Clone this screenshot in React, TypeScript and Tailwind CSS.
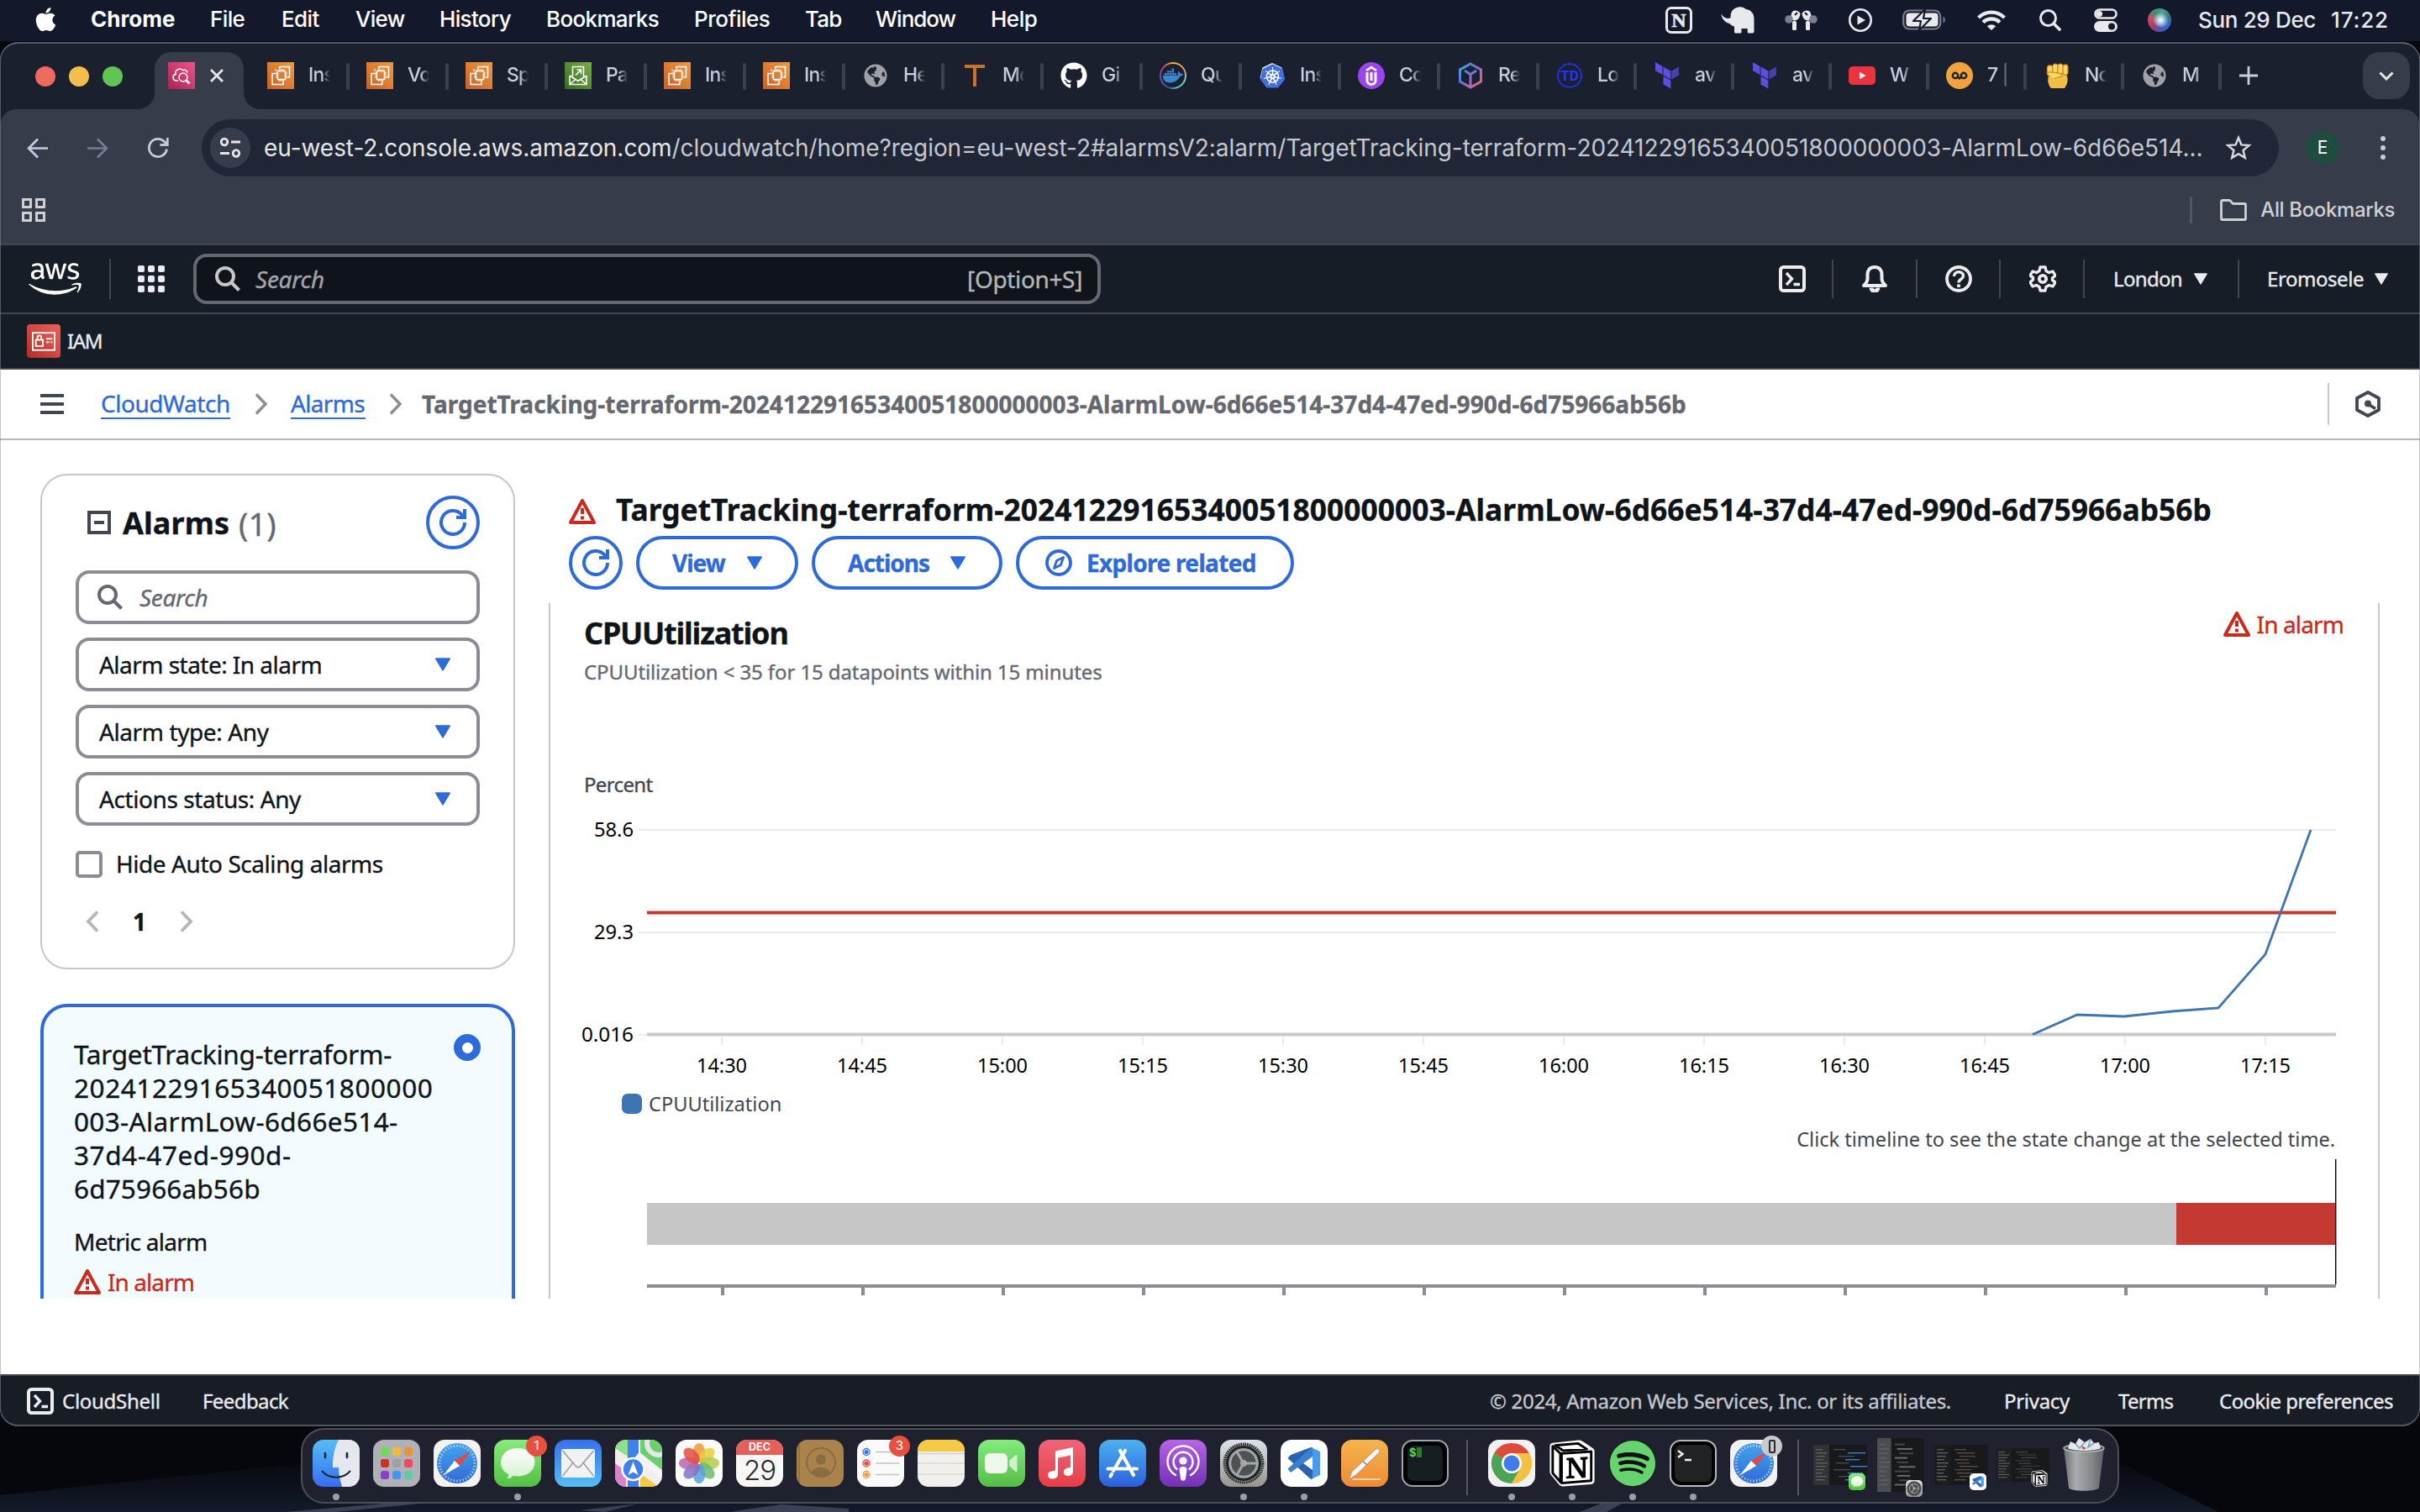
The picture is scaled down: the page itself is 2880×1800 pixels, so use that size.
import React from "react";
import { FaApple, FaAws, FaGithub, FaDocker, FaGlobeAmericas, FaSpotify } from "react-icons/fa";
import { SiKubernetes } from "react-icons/si";

type Kids = { children?: React.ReactNode };

const ALARM = "TargetTracking-terraform-20241229165340051800000003-AlarmLow-6d66e514-37d4-47ed-990d-6d75966ab56b";

/* ------------------------------------------------------------------ menu bar */

const menus: [string, string][] = [
  ["File", "w-[85px] tracking-[-0.6px]"],
  ["Edit", "w-[88px] tracking-[-0.6px]"],
  ["View", "w-[100px] tracking-[-0.7px]"],
  ["History", "w-[127px] tracking-[-0.66px]"],
  ["Bookmarks", "w-[176px] tracking-[-0.65px]"],
  ["Profiles", "w-[132px] tracking-[-0.5px]"],
  ["Tab", "w-[84px] tracking-[-0.8px]"],
  ["Window", "w-[137px] tracking-[-1px]"],
  ["Help", "tracking-[-0.5px]"],
];

function MenuBar() {
  return (
    <div className="flex h-[49px] items-start bg-[#13182b] text-[26px] font-medium text-white">
      <div className="flex h-[45px] items-center pl-[40px]">
        <FaApple className="mr-[39px] h-[32px] w-[29px]" />
        <span className="w-[142px] font-bold">Chrome</span>
        {menus.map(([m, c]) => (
          <span key={m} className={c}>{m}</span>
        ))}
      </div>
      <div className="ml-auto flex h-[47px] items-center pr-[37px] text-[#e8e9ec]">
        <div className="flex size-[32px] items-center justify-center rounded-[7px] border-[3px] border-current font-['Liberation_Serif'] text-[24px] font-bold leading-none [-webkit-text-stroke:0.6px]">
          N
        </div>
        <svg viewBox="0 0 40 32" className="ml-[34px] h-[32px] w-[40px]" fill="currentColor">
          <path d="M.3 8.500C3 13 8 15.500 11.500 13C11.500 6 14 1.500 21 .4C25 0 28 1.300 30 3C37 4 39.500 9 39.500 15V29.500C39.500 30.800 38.500 31.500 37.500 31.500H33.500C32.300 31.500 31.700 31 31.700 30V26H24.500V30C24.500 31 24 31.500 23 31.500H18C16.500 31.500 16 31 16 30V23.500C13.500 23 12 21.500 10 20C5 18.500 1 14.500 .3 8.500Z" />
        </svg>
        <svg viewBox="0 0 40 28" className="ml-[36px] h-[28px] w-[40px]">
          <g fill="currentColor">
            <path d="M10 3A7 6.500 0 0 1 18.500 6C18 11 16 14 11 14.500C7 14 6 7 10 3Z" />
            <rect x="9" y="15" width="5" height="11" rx="1.500" />
            <path d="M29 3A7 6.500 0 0 0 20.500 6C21 11 23 14 28 14.500C32 14 33 7 29 3Z" />
            <rect x="25" y="15" width="5" height="11" rx="1.500" />
          </g>
          <circle cx="5" cy="13" r="4.800" fill="#7b7e8b" />
          <circle cx="34" cy="13" r="4.800" fill="#7b7e8b" />
          <path d="M12 8L15 5M27 8L24 5" stroke="#13182b" strokeWidth="2" />
        </svg>
        <svg viewBox="0 0 28 28" className="ml-[36px] size-[28px]">
          <circle cx="14" cy="14" r="12.700" fill="none" stroke="currentColor" strokeWidth="2.600" />
          <path d="M10.500 8.500L20 14L10.500 19.500Z" fill="currentColor" />
        </svg>
        <svg viewBox="0 0 52 26" className="ml-[36px] h-[26px] w-[52px]">
          <rect x="1.200" y="1.500" width="44" height="22" rx="7" fill="none" stroke="#7b7e8b" strokeWidth="2.200" />
          <rect x="4.500" y="4.500" width="38" height="16" rx="4" fill="currentColor" />
          <path d="M48.500 8.500C51.500 10 51.500 15 48.500 16.500Z" fill="#7b7e8b" />
          <path d="M27 0L13 14H22L20 25L34 11H25Z" fill="currentColor" stroke="#13182b" strokeWidth="2.200" strokeLinejoin="round" />
        </svg>
        <svg viewBox="0 0 34 26" className="ml-[37px] h-[26px] w-[34px]" fill="none" stroke="currentColor" strokeWidth="4.400">
          <path d="M1.500 10A22 22 0 0 1 32.500 10" />
          <path d="M7 15.500A14.500 14.500 0 0 1 27 15.500" />
          <path d="M11.800 20.200A7.600 7.600 0 0 1 22.200 20.200L17 25Z" fill="currentColor" stroke="none" />
        </svg>
        <svg viewBox="0 0 26 26" className="ml-[40px] size-[26px]" fill="none" stroke="currentColor" strokeWidth="3" strokeLinecap="round">
          <circle cx="10.500" cy="10.500" r="9" />
          <path d="M17.500 17.500L24 24" strokeWidth="3.600" />
        </svg>
        <svg viewBox="0 0 28 28" className="ml-[39px] size-[28px]">
          <rect x="1.500" y="1.500" width="25" height="10" rx="5" fill="none" stroke="currentColor" strokeWidth="2.600" />
          <circle cx="6.500" cy="6.500" r="3.600" fill="currentColor" />
          <rect x="0" y="15" width="28" height="13" rx="6.500" fill="currentColor" />
          <circle cx="21" cy="21.500" r="4" fill="#13182b" />
        </svg>
        <div className="ml-[36px] size-[28px] rounded-full bg-[radial-gradient(circle_at_55%_50%,#ffffff_0%,#b9d8ec_16%,transparent_45%),conic-gradient(from_20deg,#4aa08a,#3d6f86,#2f6bd0,#4a55b5,#a23b68,#d0485f,#3f8f6d,#4aa08a)]" />
        <span className="ml-[32px] w-[158px] whitespace-pre tracking-[-0.34px]">Sun 29 Dec</span>
        <span className="w-[69px] tracking-[0.86px]">17:22</span>
      </div>
    </div>
  );
}

/* ------------------------------------------------------------------- favicons */

function Ec2() {
  return (
    <svg viewBox="0 0 32 32" className="size-[32px]">
      <defs>
        <linearGradient id="ec2" x1="0" y1="1" x2="1" y2="0"><stop stopColor="#c8602a" /><stop offset="1" stopColor="#ef9b3e" /></linearGradient>
      </defs>
      <rect width="32" height="32" fill="url(#ec2)" />
      <g fill="none" stroke="#fff" strokeWidth="1.500">
        <rect x="12.500" y="10.500" width="9" height="10" />
        <path d="M10.500 13.500H6V26.500H19V22.500M10 10.500V8.500M15 8V5.500H26.500V18H24M14.500 10V8.500M17 10V8.500M19.500 10V8.500M14.500 21V22.500M17 21V22.500M19.500 21V22.500M10.500 13H12.500M10.500 15.500H12.500M10.500 18H12.500M21.500 13H23.500M21.500 15.500H23.500M21.500 18H23.500" />
      </g>
    </svg>
  );
}

function Terraform() {
  return (
    <svg viewBox="0 0 28 32" className="h-[32px] w-[28px]">
      <g fill="#5f4de0">
        <path d="M0 0L8.500 5V15L0 10Z" />
        <path d="M9.500 5.500L18.300 10.600V20.500L9.500 15.500Z" />
        <path d="M9.500 16.700L18.300 21.700V31.500L9.500 26.600Z" />
      </g>
      <path d="M19.200 10.600L28 5.500V15.500L19.200 20.500Z" fill="#4440b2" />
    </svg>
  );
}

function Udacity() {
  return (
    <div className="flex size-[32px] items-center justify-center rounded-full bg-[#9b45ee]">
      <svg viewBox="0 0 16 24" className="h-[24px] w-[16px]" fill="none" stroke="#fff" strokeWidth="3">
        <path d="M3 8V18A5 4.500 0 0 0 13 18V8M8 8V18" />
        <path d="M2 6L8 2L14 6" strokeWidth="2.600" />
      </svg>
    </div>
  );
}

const favicons: Record<string, React.ReactNode> = {
  ec2: <Ec2 />,
  pa: (
    <svg viewBox="0 0 32 32" className="size-[32px]">
      <defs>
        <linearGradient id="ses" x1="0" y1="1" x2="1" y2="0"><stop stopColor="#356b22" /><stop offset="1" stopColor="#78b043" /></linearGradient>
      </defs>
      <rect width="32" height="32" fill="url(#ses)" />
      <g fill="none" stroke="#fff" strokeWidth="1.600">
        <path d="M6 16V26.500H26V16M6 16L16 22.500L26 16M6.500 26L13 20.500M25.500 26L19 20.500" />
        <path d="M9.500 17V5.500H22.500V17M13 15.500L19 9.500M14.500 9H19.500V14" />
      </g>
    </svg>
  ),
  globe: <FaGlobeAmericas className="size-[28px] text-[#9fa1a6]" />,
  t: (
    <svg viewBox="0 0 24 26" className="h-[26px] w-[24px]" fill="#c87328"><path d="M0 0H24V4H14V26H10V4H0Z" /></svg>
  ),
  github: <FaGithub className="size-[32px] text-white" />,
  docker: (
    <div className="flex size-[32px] items-center justify-center rounded-full bg-[conic-gradient(from_0deg,#f2b04c,#e99a57_15%,#7fc8d8_30%,#58c5d8_45%,#2f5a72_55%,#4b5ca8_65%,#7b4aa0_78%,#e0485d_88%,#f2b04c)]">
      <div className="flex size-[28px] items-center justify-center rounded-full bg-[#1b202f]">
        <FaDocker className="size-[24px] text-[#3a86d1]" />
      </div>
    </div>
  ),
  k8s: (
    <div className="relative flex size-[32px] items-center justify-center">
      <svg viewBox="0 0 32 32" className="absolute inset-0 size-[32px]"><path d="M16 1L27.500 6.500L30.500 19L22.500 30H9.500L1.500 19L4.500 6.500Z" fill="#fff" /></svg>
      <SiKubernetes className="relative size-[29px] text-[#3f6fdc]" />
    </div>
  ),
  udacity: <Udacity />,
  cube: (
    <svg viewBox="0 0 30 32" className="h-[32px] w-[30px]" fill="none" strokeWidth="3">
      <defs>
        <linearGradient id="cube" x1="0" y1="0" x2="1" y2="1"><stop stopColor="#43b3dd" /><stop offset=".35" stopColor="#5a78d8" /><stop offset=".65" stopColor="#a568cc" /><stop offset="1" stopColor="#ee6a4d" /></linearGradient>
      </defs>
      <path d="M15 2L27.500 9V23L15 30L2.500 23V9ZM8 10L15 14.500L22 10M15 14.500V29" stroke="url(#cube)" />
    </svg>
  ),
  td: (
    <div className="flex size-[30px] items-center justify-center rounded-full border-[2px] border-[#1d2fe0] font-['Roboto'] text-[17px] leading-none font-bold text-[#2436ec]">TD</div>
  ),
  tf: <Terraform />,
  yt: (
    <svg viewBox="0 0 32 22" className="h-[22px] w-[32px]"><rect width="32" height="22" rx="5" fill="#eb333f" /><path d="M13 6.800L20.500 11L13 15.200Z" fill="#fff" /></svg>
  ),
  owl: (
    <svg viewBox="0 0 32 32" className="size-[32px]"><circle cx="16" cy="16" r="16" fill="#f0a23f" /><g fill="none" stroke="#1e2230" strokeWidth="2.400"><circle cx="11" cy="16" r="3.200" /><circle cx="21" cy="16" r="3.200" /><path d="M13.500 17.500L16 19.500L18.500 17.500" /></g></svg>
  ),
  fist: (
    <svg viewBox="0 0 28 32" className="h-[30px] w-[27px]">
      <path d="M3 16C3 12 25 10 26 16C29 25 24 30 23 32H6C2 28 1 21 3 16Z" fill="#f2bf45" />
      <g fill="#fbd664" stroke="#c98a1e" strokeWidth="1.200"><rect x="1" y="3" width="7" height="13" rx="3.300" /><rect x="8" y="1" width="6.500" height="13" rx="3.200" /><rect x="14.500" y="1" width="6.500" height="13" rx="3.200" /><rect x="21" y="2" width="6.300" height="13" rx="3.100" /><path d="M1.500 14C1 11 4 11 10 12C16 13 20 13 20 16C20 18 13 18 10 20" /></g>
    </svg>
  ),
};

const tabs: [string, string][] = [
  ["ec2", "Ins"], ["ec2", "Vo"], ["ec2", "Sp"], ["pa", "Pa"], ["ec2", "Ins"], ["ec2", "Ins"],
  ["globe", "He"], ["t", "Mc"], ["github", "Gi"], ["docker", "Qu"], ["k8s", "Ins"], ["udacity", "Co"], ["cube", "Re"],
  ["td", "Lo"], ["tf", "av"], ["tf", "av"], ["yt", "W"], ["owl", "7 |"], ["fist", "No"], ["globe", "M"],
];

function TabStrip() {
  return (
    <div className="flex h-[80px] bg-[#1b202f]">
      <div className="flex w-[184px] items-center gap-[16px] pt-[2px] pl-[42px]">
        <div className="size-[24px] rounded-full bg-[#ec6a5e]" />
        <div className="size-[24px] rounded-full bg-[#f4be4f]" />
        <div className="size-[24px] rounded-full bg-[#61c454]" />
      </div>
      <div className="relative mt-[12px] flex h-[68px] w-[106px] items-start rounded-t-[20px] bg-[#373c4b] pt-[12px] pl-[16px]">
        <svg className="absolute bottom-0 -left-[20px] size-[20px]" viewBox="0 0 20 20"><path d="M20 0V20H0A20 20 0 0 0 20 0Z" fill="#373c4b" /></svg>
        <svg className="absolute -right-[20px] bottom-0 size-[20px]" viewBox="0 0 20 20"><path d="M0 0V20H20A20 20 0 0 1 0 0Z" fill="#373c4b" /></svg>
        <svg viewBox="0 0 32 32" className="size-[32px]">
          <defs>
            <linearGradient id="cw" x1="0" y1="1" x2="1" y2="0"><stop stopColor="#a82650" /><stop offset="1" stopColor="#f0528e" /></linearGradient>
          </defs>
          <rect width="32" height="32" fill="url(#cw)" />
          <g fill="none" stroke="#fff" strokeWidth="1.500">
            <path d="M12 22H9C5 21 5 15.500 9 14.500C8 9 14 6 17.500 9.500C21 8.500 23 10.500 23 12.500" />
            <circle cx="18" cy="18" r="5" /><path d="M21.500 21.500L25.500 25.500" strokeWidth="2.600" />
          </g>
        </svg>
        <svg viewBox="0 0 16 16" className="mt-[8px] ml-[18px] size-[16px]" stroke="#e3e5ea" strokeWidth="2.800"><path d="M1 1L15 15M15 1L1 15" /></svg>
      </div>
      <div className="flex pl-[8px]">
        {tabs.map(([icon, label], i) => (
          <div key={i} className={i < 13 ? "flex w-[118px] pt-[24px] pl-[20px]" : "flex w-[116px] pt-[24px] pl-[20px]"}>
            <div className="flex size-[32px] shrink-0 items-center justify-center">{favicons[icon]}</div>
            <div className="ml-[17px] h-[32px] w-[26px] text-[23px] leading-[31px] font-medium tracking-[-0.8px] whitespace-pre text-[#c6cde0] [mask-image:linear-gradient(to_right,#000_60%,transparent)]">
              {label}
            </div>
            <div className="mt-[1px] ml-auto h-[32px] w-[4px] rounded-full bg-[#3b4050]" />
          </div>
        ))}
      </div>
      <svg viewBox="0 0 22 22" className="mt-[29px] ml-[21px] size-[22px]" stroke="#c6cde0" strokeWidth="2.800"><path d="M11 0V22M0 11H22" /></svg>
      <div className="mt-[12px] mr-[12px] ml-auto flex size-[56px] items-center justify-center rounded-[20px] bg-[#373c4b]">
        <svg viewBox="0 0 18 11" className="h-[11px] w-[18px]" fill="none" stroke="#e3e5ea" strokeWidth="3"><path d="M1.500 1.500L9 9L16.500 1.500" /></svg>
      </div>
    </div>
  );
}

function Toolbar() {
  return (
    <div className="bg-[#1b202f]">
      <div className="h-[160px] rounded-t-[20px] bg-[#373c4b]">
        <div className="flex h-[80px] items-center pt-[12px]">
          <div className="flex h-[68px] w-[240px] items-center pl-[32px] text-[#c3cbe1]">
            <svg viewBox="0 0 24 24" className="size-[25px]" fill="none" stroke="currentColor" strokeWidth="2.600"><path d="M24 12H2M12.500 1.500L2 12L12.500 22.500" /></svg>
            <svg viewBox="0 0 24 24" className="ml-[47px] size-[25px] text-[#777d8f]" fill="none" stroke="currentColor" strokeWidth="2.600"><path d="M0 12H22M11.500 1.500L22 12L11.500 22.500" /></svg>
            <svg viewBox="0 0 26 26" className="ml-[46px] size-[26px]" fill="none" stroke="currentColor" strokeWidth="2.800"><path d="M23.500 14.500A10.600 10.600 0 1 1 20.500 5.500L24 9M24.300 1V9.500H15.500" /></svg>
          </div>
          <div className="flex h-[68px] w-[2472px] items-center rounded-full bg-[#202635] pr-[32px] pl-[10px]">
            <div className="flex size-[48px] items-center justify-center rounded-full bg-[#373c4b]">
              <svg viewBox="0 0 26 26" className="size-[26px]" fill="none" stroke="#e3e5ea" strokeWidth="2.800"><circle cx="6" cy="6" r="3.800" /><path d="M14 6H25M1 19.500H12" /><circle cx="20" cy="19.500" r="3.800" /></svg>
            </div>
            <div className="ml-[16px] text-[28px] tracking-[-0.05px] whitespace-nowrap text-[#c4c8d1]">
              <span className="text-[#e6e7ea]">eu-west-2.console.aws.amazon.com</span>/cloudwatch/home?region=eu-west-2#alarmsV2:alarm/TargetTracking-terraform-20241229165340051800000003-AlarmLow-6d66e514...
            </div>
            <svg viewBox="0 0 32 31" className="ml-auto h-[30px] w-[32px]" fill="none" stroke="#d6d8de" strokeWidth="2.600"><path d="M16 3L19.600 11.800L29 12.500L21.800 18.600L24 27.800L16 22.900L8 27.800L10.200 18.600L3 12.500L12.400 11.800Z" /></svg>
          </div>
          <div className="ml-[32px] flex size-[40px] items-center justify-center rounded-full bg-[#1e4d3f] text-[21px] text-white">E</div>
          <svg viewBox="0 0 6 28" className="ml-[49px] h-[28px] w-[6px]" fill="#c3cbe1"><circle cx="3" cy="3" r="3" /><circle cx="3" cy="14" r="3" /><circle cx="3" cy="25" r="3" /></svg>
        </div>
        <div className="flex h-[80px] items-center pr-[30px] pl-[26px] text-[#cfd0d4]">
          <svg viewBox="0 0 28 28" className="size-[28px]" fill="none" stroke="currentColor" strokeWidth="3"><path d="M1.500 1.500H10.500V10.500H1.500ZM17.500 1.500H26.500V10.500H17.500ZM1.500 17.500H10.500V26.500H1.500ZM17.500 17.500H26.500V26.500H17.500Z" /></svg>
          <div className="ml-auto h-[32px] w-[3px] bg-[#505667]" />
          <svg viewBox="0 0 32 26" className="ml-[33px] h-[26px] w-[32px]" fill="none" stroke="currentColor" strokeWidth="2.800" strokeLinejoin="round"><path d="M1.500 3A1.500 1.500 0 0 1 3 1.500H11.500L15.500 5.500H29A1.500 1.500 0 0 1 30.500 7V23A1.500 1.500 0 0 1 29 24.500H3A1.500 1.500 0 0 1 1.500 23Z" /></svg>
          <span className="ml-[16px] text-[24px] font-medium tracking-[-0.38px]">All Bookmarks</span>
        </div>
      </div>
    </div>
  );
}

/* ---------------------------------------------------------------- AWS console */

function Triangle({ className }: { className: string }) {
  return (
    <svg viewBox="0 0 20 16" className={className}><path d="M1.800 1H18.200L10 14.800Z" fill="currentColor" stroke="currentColor" strokeWidth="1.600" strokeLinejoin="round" /></svg>
  );
}

function Refresh() {
  return (
    <svg viewBox="0 0 32 32" className="size-[32px]" fill="none" stroke="currentColor" strokeWidth="4">
      <path d="M30 16A14 14 0 1 1 26 6.200L29 10" /><path d="M30 0V10H20" />
    </svg>
  );
}

function Warning({ className }: { className: string }) {
  return (
    <svg viewBox="0 0 32 30" className={className} fill="none" stroke="currentColor" strokeWidth="4" strokeLinejoin="round">
      <path d="M16 2L30 28H2Z" /><path d="M16 11V18M16 20.500V24.500" />
    </svg>
  );
}

function Magnifier({ className }: { className: string }) {
  return (
    <svg viewBox="0 0 30 30" className={className} fill="none" stroke="currentColor" strokeWidth="4"><circle cx="12" cy="12" r="10" /><path d="M19 19L28.500 28.500" /></svg>
  );
}

function Shell() {
  return (
    <svg viewBox="0 0 32 32" className="size-[32px]" fill="none" stroke="currentColor" strokeWidth="4"><rect x="2" y="2" width="28" height="28" rx="3.500" /><path d="M9 9L15.500 16L9 23" strokeWidth="3.400" /><path d="M17.500 22.500H25" strokeWidth="3.600" /></svg>
  );
}

function Crumb() {
  return (
    <svg viewBox="0 0 16 26" className="h-[26px] w-[16px]" fill="none" stroke="#8c8c94" strokeWidth="3.400"><path d="M2 1.500L13 13L2 24.500" /></svg>
  );
}

function Divided({ children, className }: Kids & { className: string }) {
  return <div className={`flex h-[46px] items-center border-r-[2px] border-[#424650] ${className}`}>{children}</div>;
}

function AwsHeader() {
  return (
    <>
      <div className="flex h-[84px] items-center border-y-[2px] border-[#424650] bg-[#161d26] text-[#ebebf0]">
        <div className="flex h-[48px] w-[132px] items-center border-r-[2px] border-[#424650] pl-[34px]">
          <FaAws className="h-[50px] w-[63px] text-white" />
        </div>
        <div className="ml-[32px] grid grid-cols-3 gap-[4px]">
          {Array.from({ length: 9 }, (_, i) => <div key={i} className="size-[8px] rounded-[2px] bg-[#ebebf0]" />)}
        </div>
        <div className="ml-[34px] flex h-[60px] w-[1080px] items-center rounded-[16px] border-[4px] border-[#656871] bg-[#0f141a] pr-[18px] pl-[22px] text-[28px] text-[#a4a4ad]">
          <Magnifier className="size-[30px] text-[#c6c6cd]" />
          <span className="ml-[18px] tracking-[-0.25px] italic">Search</span>
          <span className="ml-auto tracking-[-0.35px] text-[#b4b4bb]">[Option+S]</span>
        </div>
        <div className="ml-auto flex items-center text-[24px]">
          <Divided className="w-[100px] justify-center pl-[3px]"><Shell /></Divided>
          <Divided className="w-[100px] justify-center">
            <svg viewBox="0 0 32 32" className="size-[32px]" fill="none" stroke="currentColor" strokeWidth="4"><path d="M16 2C10 2 7.500 6 7.500 11V16C7.500 20 5 22 3 24H29C27 22 24.500 20 24.500 16V11C24.500 6 22 2 16 2Z" strokeLinejoin="round" /><path d="M12 26.500A4 4 0 0 0 20 26.500" strokeWidth="5" /></svg>
          </Divided>
          <Divided className="w-[99px] justify-center">
            <svg viewBox="0 0 32 32" className="size-[32px]" fill="none" stroke="currentColor" strokeWidth="3.800"><circle cx="16" cy="16" r="14" /><path d="M10.500 13C10.500 6 21.500 6 21.500 12.500C21.500 16.500 16 16 16 20.500" strokeWidth="3.400" /><path d="M16 22.500V26" /></svg>
          </Divided>
          <Divided className="w-[100px] justify-center pl-[2px]">
            <svg viewBox="0 0 32 32" className="size-[32px]" fill="none" stroke="currentColor" strokeWidth="3.800" strokeLinejoin="round"><path d="M13 2H19L20 6.500L23.500 8.500L28 7L31 12L27.500 15V17.500L31 20L28 25L23.500 23.500L20 25.500L19 30H13L12 25.500L8.500 23.500L4 25L1 20L4.500 17V14.500L1 12L4 7L8.500 8.500L12 6.500Z" strokeWidth="3.400" /><circle cx="16" cy="16" r="4.200" /></svg>
          </Divided>
          <Divided className="w-[184px] pl-[34px]"><span className="w-[95px] tracking-[-0.67px]">London</span><Triangle className="h-[14px] w-[18px]" /></Divided>
          <div className="flex w-[215px] items-center pl-[33px]"><span className="w-[127px] tracking-[-0.45px]">Eromosele</span><Triangle className="h-[14px] w-[18px]" /></div>
        </div>
      </div>
      <div className="flex h-[66px] items-center border-b-[2px] border-[#424650] bg-[#161d26] pl-[32px] text-[#ebebf0]">
        <div className="flex size-[40px] items-center justify-center rounded-[4px] bg-linear-to-tr from-[#b32d29] to-[#ec625a]">
          <svg viewBox="0 0 30 24" className="h-[23px] w-[28px]" fill="none" stroke="#fff" strokeWidth="2"><rect x="1" y="1" width="28" height="22" /><rect x="5" y="10" width="9" height="8" /><path d="M7 10V7A2.500 2.500 0 0 1 12 7V10M18 8.500H26M18 13H22M24 13H26" /></svg>
        </div>
        <span className="ml-[8px] text-[24px] tracking-[-1.400px]">IAM</span>
      </div>
    </>
  );
}

function Breadcrumbs() {
  return (
    <div className="flex h-[84px] items-center border-b-[2px] border-[#b4b4bb] bg-white pl-[48px] text-[28px] text-[#2e6ada]">
      <svg viewBox="0 0 28 24" className="h-[24px] w-[28px]" fill="#424650"><path d="M0 0H28V4H0ZM0 10H28V14H0ZM0 20H28V24H0Z" /></svg>
      <span className="ml-[44px] h-[36px] w-[154px] border-b-[2px] border-current leading-[34px] tracking-[-0.47px]">CloudWatch</span>
      <div className="w-[72px] pl-[29px]"><Crumb /></div>
      <span className="h-[36px] w-[89px] border-b-[2px] border-current leading-[34px] tracking-[-0.66px]">Alarms</span>
      <div className="w-[67px] pl-[28px]"><Crumb /></div>
      <span className="mb-px leading-[36px] font-bold tracking-[0.02px] text-[#656871]">{ALARM}</span>
      <div className="ml-auto h-[50px] w-[2px] bg-[#c6c6cd]" />
      <svg viewBox="0 0 30 32" className="mr-[47px] ml-[31px] h-[32px] w-[30px]" fill="none" stroke="#424650" strokeWidth="3.800" strokeLinejoin="round">
        <path d="M15 2L28 9V23L15 30L2 23V9Z" /><path d="M15 16L24 21.500" /><circle cx="15" cy="15.500" r="4" fill="#424650" stroke="none" />
      </svg>
    </div>
  );
}

const box = "flex h-[64px] items-center rounded-[16px] border-[4px] border-[#8c8c94] text-[28px] leading-[40px]";

function Select({ children, className }: Kids & { className: string }) {
  return (
    <div className={`${box} justify-between pr-[30px] pl-[24px]`}>
      <span className={`mb-px ${className}`}>{children}</span>
      <Triangle className="h-[16px] w-[20px] text-[#2e6ada]" />
    </div>
  );
}

function Sidebar() {
  return (
    <div className="w-[565px] shrink-0 pt-[40px] text-[#0f141a]">
      <div className="h-[590px] rounded-[32px] border-[2px] border-[#c6c6cd] px-[40px] pt-[24px]">
        <div className="flex h-[64px] items-center pl-[14px]">
          <svg viewBox="0 0 28 28" className="size-[28px]" fill="none" stroke="#424650" strokeWidth="4"><path d="M2 2H26V26H2ZM8 14H20" /></svg>
          <span className="mt-[2px] ml-[14px] text-[36px] leading-[44px] font-bold tracking-[0.1px]">Alarms</span>
          <span className="mt-[2px] ml-[11px] text-[38px] leading-[44px] text-[#656871]">(1)</span>
          <div className="ml-auto flex size-[64px] items-center justify-center rounded-full border-[4px] border-[#2e6ada] text-[#2e6ada]"><Refresh /></div>
        </div>
        <div className="mt-[25px] flex flex-col gap-[16px]">
          <div className={`${box} pl-[22px]`}>
            <Magnifier className="size-[30px] text-[#656871]" />
            <span className="mb-px ml-[20px] tracking-[-0.35px] text-[#656871] italic">Search</span>
          </div>
          <Select className="tracking-[-0.53px]">Alarm state: In alarm</Select>
          <Select className="tracking-[-0.4px]">Alarm type: Any</Select>
          <Select className="tracking-[-0.42px]">Actions status: Any</Select>
        </div>
        <div className="mt-[30px] flex h-[32px] items-center">
          <div className="size-[32px] rounded-[5px] border-[4px] border-[#8c8c94]" />
          <span className="mb-[2px] ml-[16px] text-[28px] leading-[32px] tracking-[-0.44px]">Hide Auto Scaling alarms</span>
        </div>
        <div className="mt-[36px] flex h-[32px] items-center pl-[12px] text-[#b4b4bb]">
          <svg viewBox="0 0 16 26" className="h-[26px] w-[16px]" fill="none" stroke="currentColor" strokeWidth="3.800"><path d="M14 1.500L3 13L14 24.500" /></svg>
          <span className="w-[96px] text-center text-[28px] leading-[32px] font-bold text-[#0f141a]">1</span>
          <svg viewBox="0 0 16 26" className="h-[26px] w-[16px]" fill="none" stroke="currentColor" strokeWidth="3.800"><path d="M2 1.500L13 13L2 24.500" /></svg>
        </div>
      </div>
      <div className="mt-[41px] h-[500px] rounded-[32px] border-[4px] border-[#2e6ada] bg-[#f2fbfe] pt-[36px] pr-[37px] pl-[36px]">
        <div className="flex">
          <div className="flex flex-col text-[31.500px] leading-[40px] whitespace-nowrap">
            <span className="tracking-[-0.22px]">TargetTracking-terraform-</span>
            <span className="tracking-[0.560px]">20241229165340051800000</span>
            <span className="tracking-[0.350px]">003-AlarmLow-6d66e514-</span>
            <span className="tracking-[0.550px]">37d4-47ed-990d-</span>
            <span className="tracking-[0.150px]">6d75966ab56b</span>
          </div>
          <div className="-mt-[4px] ml-auto flex size-[32px] items-center justify-center rounded-full bg-[#2e6ada]"><div className="size-[13px] rounded-full bg-white" /></div>
        </div>
        <div className="mt-[23px] text-[28px] leading-[40px] tracking-[-0.72px]">Metric alarm</div>
        <div className="mt-[8px] flex items-center text-[28px] leading-[40px] tracking-[-0.93px] text-[#ca2a1c]"><Warning className="mr-[8px] h-[30px] w-[32px]" />In alarm</div>
      </div>
    </div>
  );
}

const pill = "flex h-[64px] items-center rounded-full border-[4px] border-[#2e6ada]";
const hours = ["14:30", "14:45", "15:00", "15:15", "15:30", "15:45", "16:00", "16:15", "16:30", "16:45", "17:00", "17:15"];

function Chart() {
  return (
    <svg viewBox="696 960 2086 586" className="block h-[586px] w-[2086px] overflow-visible font-['Noto_Sans']" fontSize="24">
      <g fill="#ebebeb">
        <rect x="761" y="987" width="2020" height="2" />
        <rect x="761" y="1109" width="2020" height="2" />
        <rect x="761" y="1231" width="10" height="2" />
      </g>
      <rect x="771" y="1229.500" width="2010" height="4" fill="#c9cacb" />
      <rect x="771" y="1084.500" width="2010" height="4" fill="#c43a33" />
      <polyline points="2420,1231.500 2473,1208 2529,1210 2586,1204 2641,1200 2697,1136 2751,988" fill="none" stroke="#3b76b3" strokeWidth="2.800" />
      <g textAnchor="end" fill="#000">
        <text x="755" y="996" fontSize="23.700">58.6</text>
        <text x="755" y="1118" fontSize="23.700">29.3</text>
        <text x="755" y="1240" fontSize="24.300">0.016</text>
      </g>
      {hours.map((h, i) => (
        <g key={h}>
          <rect x={859 + i * 167} y="1234" width="2" height="10" fill="#ebebeb" />
          <text x={860 + i * 167} y="1277" textAnchor="middle" fontSize="23.500">{h}</text>
          <rect x={859 + i * 167} y="1532" width="4" height="10" fill="#8c8c94" />
        </g>
      ))}
      <rect x="741" y="1302" width="24" height="24" rx="7" fill="#3b76b3" />
      <text x="773" y="1323" fontSize="23.600" fill="#424650">CPUUtilization</text>
      <text x="2780" y="1365" fontSize="23.550" textAnchor="end" fill="#424650">Click timeline to see the state change at the selected time.</text>
      <rect x="771" y="1432" width="1820" height="50" fill="#c6c6c6" />
      <rect x="2591" y="1432" width="189" height="50" fill="#c43a33" />
      <rect x="771" y="1529" width="2010" height="4" fill="#8c8c94" />
      <rect x="2780" y="1380" width="1.400" height="149" fill="#000" />
    </svg>
  );
}

function Detail() {
  return (
    <div className="ml-[40px] flex w-[2179px] flex-col pt-[58px] text-[#0f141a]">
      <div className="flex h-[48px] items-center pl-[24px]">
        <Warning className="mt-[6px] h-[30px] w-[32px] text-[#ca2a1c]" />
        <span className="ml-[24px] text-[35.350px] leading-[48px] font-bold tracking-[0.03px] whitespace-nowrap">{ALARM}</span>
      </div>
      <div className="mt-[8px] flex gap-[16px] pl-[24px] text-[28px] leading-[40px] font-bold text-[#2e6ada]">
        <div className={`${pill} w-[64px] justify-center`}><Refresh /></div>
        <div className={`${pill} w-[193px] pl-[39px]`}><span className="w-[88px] tracking-[-1px]">View</span><Triangle className="h-[16px] w-[20px]" /></div>
        <div className={`${pill} w-[227px] pl-[39px]`}><span className="w-[121px] tracking-[-1px]">Actions</span><Triangle className="h-[16px] w-[20px]" /></div>
        <div className={`${pill} w-[331px] pl-[31px]`}>
          <svg viewBox="0 0 32 32" className="size-[32px]" fill="none" stroke="currentColor"><circle cx="16" cy="16" r="14" strokeWidth="3.800" /><path d="M21.500 9.500L18.500 18.500L10.500 22.500L13.500 13.500Z" strokeWidth="2.800" strokeLinejoin="round" /></svg>
          <span className="ml-[17px] tracking-[-0.66px]">Explore related</span>
        </div>
      </div>
      <div className="mt-[16px] flex-1 border-x-[2px] border-[#c6c6cd] pl-[40px]">
        <div className="flex pt-[5px]">
          <div className="pt-[8px]">
            <div className="text-[36px] leading-[46px] font-bold tracking-[-1.200px]">CPUUtilization</div>
            <div className="mt-[7px] text-[24px] leading-[32px] tracking-[-0.100px] text-[#656871]">CPUUtilization &lt; 35 for 15 datapoints within 15 minutes</div>
          </div>
          <div className="mr-[41px] ml-auto flex h-[40px] items-center text-[28px] leading-[40px] tracking-[-0.88px] text-[#ca2a1c]"><Warning className="mr-[8px] h-[30px] w-[32px]" />In alarm</div>
        </div>
        <div className="mt-[102px] text-[24px] leading-[32px] tracking-[-0.65px] text-[#424650]">Percent</div>
        <div className="mt-[10px]"><Chart /></div>
      </div>
    </div>
  );
}

function Footer() {
  return (
    <div className="flex h-[62px] items-center border-t-[2px] border-[#424650] bg-[#171c25] pr-[32px] pl-[32px] text-[24px] text-[#ebebf0]">
      <Shell />
      <span className="ml-[10px] w-[167px] tracking-[-0.28px]">CloudShell</span>
      <span className="tracking-[-0.6px]">Feedback</span>
      <span className="ml-auto w-[612px] tracking-[-0.31px] text-[#c6c6cd]">© 2024, Amazon Web Services, Inc. or its affiliates.</span>
      <span className="w-[136px] tracking-[-0.3px]">Privacy</span>
      <span className="w-[120px] tracking-[-0.75px]">Terms</span>
      <span className="tracking-[-0.55px]">Cookie preferences</span>
    </div>
  );
}

/* ----------------------------------------------------------------------- dock */

const sq = "relative size-[56px] shrink-0 rounded-[13px]";

function App56({ children, className = "", dot, badge }: Kids & { className?: string; dot?: boolean; badge?: string }) {
  return (
    <div className="relative h-[56px] w-[56px] shrink-0">
      <div className={`${sq} flex items-center justify-center overflow-hidden ${className}`}>{children}</div>
      {badge && <div className="absolute -top-[5px] -right-[7px] flex size-[25px] items-center justify-center rounded-full bg-[#e5503f] text-[15px] text-white">{badge}</div>}
      {dot && <div className="absolute top-[64px] left-[24px] size-[8px] rounded-full bg-[#9b9ca8]" />}
    </div>
  );
}

const ticks = Array.from({ length: 36 }, (_, i) => i * 10);

function SafariIcon() {
  return (
    <svg viewBox="0 0 56 56" className="size-full">
      <defs><linearGradient id="saf" x1="0" y1="0" x2="0" y2="1"><stop stopColor="#46a3ea" /><stop offset="1" stopColor="#2e6bd8" /></linearGradient></defs>
      <rect width="56" height="56" fill="#f2f2f3" />
      <circle cx="28" cy="28" r="24" fill="url(#saf)" />
      {ticks.map((t) => <path key={t} d="M28 5.500V8.500" stroke="#d6e6f8" strokeWidth="1" transform={`rotate(${t} 28 28)`} />)}
      <path d="M44.500 13.500L25 25L31 31Z" fill="#e5483f" />
      <path d="M11.500 42.500L25 25L31 31Z" fill="#fff" />
    </svg>
  );
}

function MessagesIcon() {
  return (
    <svg viewBox="0 0 56 56" className="size-full">
      <defs>
        <linearGradient id="msg" x1="0" y1="0" x2="0" y2="1"><stop stopColor="#86ec7c" /><stop offset="1" stopColor="#55bf45" /></linearGradient>
        <linearGradient id="bub" x1="0" y1="0" x2="0" y2="1"><stop stopColor="#fff" /><stop offset="1" stopColor="#d4f0cf" /></linearGradient>
      </defs>
      <rect width="56" height="56" fill="url(#msg)" />
      <path d="M28 10C40 10 48.500 17.500 48.500 27C48.500 37 39 43.500 28 43.500C26 43.500 24 43.300 22.500 43C20 46 17 46.500 15.500 46C17 44 17.500 42 17 41C11 38 8 33 8 27C8 17.500 16 10 28 10Z" fill="url(#bub)" />
    </svg>
  );
}

function SettingsIcon() {
  return (
    <svg viewBox="0 0 56 56" className="size-full">
      <defs><linearGradient id="set" x1="0" y1="0" x2="0" y2="1"><stop stopColor="#dbe3ea" /><stop offset="1" stopColor="#97948f" /></linearGradient></defs>
      <rect width="56" height="56" fill="url(#set)" />
      <circle cx="28" cy="28" r="23" fill="#8d9092" stroke="#26282a" strokeWidth="3" strokeDasharray="1.600 1" />
      <circle cx="28" cy="28" r="19.500" fill="none" stroke="#1e2022" strokeWidth="3" />
      <circle cx="28" cy="28" r="16" fill="#4e5255" stroke="#a3a7aa" strokeWidth="2.600" />
      <path d="M28 28L44 28M28 28L20 14.200M28 28L20 41.800" stroke="#a3a7aa" strokeWidth="3" />
      <circle cx="28" cy="28" r="4" fill="#a3a7aa" />
    </svg>
  );
}

function VsCodeIcon() {
  return (
    <svg viewBox="0 0 56 56" className="size-full">
      <rect width="56" height="56" fill="#fff" />
      <path d="M36 9L39 10V46L36 47L8.500 22L12 18Z" fill="#2a62ae" />
      <path d="M38 9V20L12 39L8.500 34.500L37 9Z" fill="#3a7fd0" />
      <path d="M36 9L47 14V42L36 47C38 46 38 44 38 43V13C38 11 37.500 9.500 36 9Z" fill="#4a9aea" />
      <path d="M38 20L27 28L38 36Z" fill="#fff" />
    </svg>
  );
}

function NotionIcon() {
  return (
    <svg viewBox="0 0 56 58" className="size-full">
      <path d="M4 4L36 0.500C38 .300 39 1 41 2L53 10C55 11.500 55.500 12.500 55.500 14V50C55.500 53 54 54.500 51 55L17 57.500C14.500 57.700 13 57 11.500 55L2.500 44C1 42 .5 41 .5 39V8C.5 5.500 1.500 4.300 4 4Z" fill="#fff" />
      <path d="M7 7L35 4.500L46 11.500L17 13.500Z" fill="#fff" stroke="#000" strokeWidth="3" strokeLinejoin="round" />
      <path d="M4 8L13.500 17V52L4 41Z" fill="#fff" stroke="#000" strokeWidth="3" strokeLinejoin="round" />
      <path d="M15 17L51.500 14.500V50.500L15 53.500Z" fill="#fff" stroke="#000" strokeWidth="3" strokeLinejoin="round" />
      <path d="M21 22.500L29 22L41 40V25L38 24V21.500L47 21V23.500L44.500 24.500V46.500L40 47L27 28V44L31 45V47.500L20.500 48V45.500L24 44.500V25.500L21 25Z" fill="#000" />
    </svg>
  );
}

const petals = ["#ee9a3c", "#e9cf3a", "#b4cc4b", "#6dbb6f", "#5aa0d8", "#7d74c4", "#b866b0", "#e5503f"];

const lines = [5, 9, 13, 17, 21, 25, 29, 33, 37, 41];

function MiniWindow({ className, rows, side, right, children }: Kids & { className: string; rows: string; side: string; right?: boolean }) {
  return (
    <div className={`relative shrink-0 bg-[#18191b] ${className}`}>
      <svg viewBox="0 0 64 48" preserveAspectRatio="none" className="absolute inset-0 size-full">
        <rect width="19" height="48" fill={side} />
        {lines.map((y, i) => (
          <g key={y}>
            <rect x="3" y={y} width={8 + ((i * 5) % 7)} height="1.400" fill="#5b5e62" />
            <rect x={(right && i % 2 ? 38 : 24) + (i % 3) * 3} y={y} width={14 + ((i * 7) % 9)} height="1.400" fill={i % 2 ? rows : "#45484c"} />
          </g>
        ))}
      </svg>
      <div className="absolute right-[2px] -bottom-[6px] size-[20px] overflow-hidden rounded-[5px]">{children}</div>
    </div>
  );
}

function Dock() {
  return (
    <div className="absolute top-[1700px] left-[358px] flex h-[90px] w-[2164px] items-start rounded-[28px] border-[2px] border-[#4b4e58] bg-[#1f222e] pt-[12px] pl-[12px]">
      <div className="flex gap-[16px]">
        <App56 dot className="bg-linear-to-b from-[#57bdf5] to-[#3a6cf0]">
          <svg viewBox="0 0 56 56" className="size-full">
            <path d="M31 0C25 12 24 22 24 33H31C31 42 33 49 35 56H56V0Z" fill="#e5e8ee" />
            <path d="M15 16V21M41 16V21" stroke="#1d2736" strokeWidth="2.600" strokeLinecap="round" />
            <path d="M11.500 37.500C20 47 36 47 44.500 37.500" fill="none" stroke="#1d2736" strokeWidth="2" strokeLinecap="round" />
          </svg>
        </App56>
        <App56 className="bg-[#b0b1b7]">
          <div className="grid grid-cols-3 gap-[4px]">
            <div className="size-[10px] rounded-[3px] bg-[#6bdc4e]" /><div className="size-[10px] rounded-[3px] bg-[#f3b93c]" /><div className="size-[10px] rounded-[3px] bg-[#ea9233]" />
            <div className="size-[10px] rounded-[3px] bg-[#cf2f26]" /><div className="size-[10px] rounded-[3px] bg-[#9aa0a6]" /><div className="size-[10px] rounded-[3px] bg-[#f04762]" />
            <div className="size-[10px] rounded-[3px] bg-[#8a3fc8]" /><div className="size-[10px] rounded-[3px] bg-[#3f98f0]" /><div className="size-[10px] rounded-[3px] bg-[#5fcba8]" />
          </div>
        </App56>
        <App56><SafariIcon /></App56>
        <App56 dot badge="1"><MessagesIcon /></App56>
        <App56 className="bg-linear-to-b from-[#3670ea] to-[#56bdf6]">
          <svg viewBox="0 0 40 26" className="h-[34px] w-[40px]" preserveAspectRatio="none"><rect width="40" height="26" rx="2.500" fill="#f1f2f3" /><path d="M1.500 24.500L14.500 12M38.500 24.500L25.500 12M1.500 1.500L17 15.500C19 17 21 17 23 15.500L38.500 1.500" fill="none" stroke="#9fa3a8" strokeWidth="1.400" /></svg>
        </App56>
        <App56 className="bg-[#f1efee]">
          <svg viewBox="0 0 56 56" className="size-full">
            <path d="M0 0H15V20L0 10Z" fill="#8ee08a" /><path d="M30 0H56V40L30 20Z" fill="#6bd06b" />
            <path d="M15 0H28V56H15Z" fill="#3f80f0" /><path d="M0 28L13 38V56H0Z" fill="#d983c9" /><path d="M30 40L52 56H30Z" fill="#f4c945" />
            <path d="M26 18L56 42" stroke="#f4f4f4" strokeWidth="9" /><circle cx="52" cy="4" r="14" fill="none" stroke="#e3e6ea" strokeWidth="6" />
            <circle cx="21.500" cy="35" r="13" fill="#3f80f0" stroke="#fff" strokeWidth="2.600" /><path d="M21.500 26L27.500 42L21.500 38.500L15.500 42Z" fill="#fff" />
          </svg>
        </App56>
        <App56 className="bg-[#fbfbfb]">
          <svg viewBox="0 0 56 56" className="size-full">
            {petals.map((p, i) => <ellipse key={p} cx="28" cy="15.500" rx="7.300" ry="11.500" fill={p} fillOpacity=".85" transform={`rotate(${i * 45} 28 28)`} />)}
          </svg>
        </App56>
        <App56 className="flex-col bg-[#f8f7f6]">
          <div className="flex h-[18px] w-full shrink-0 items-center justify-center bg-[#e5605a] text-[12.500px] font-bold text-white">DEC</div>
          <div className="flex h-[38px] items-center text-[33px] font-light tracking-[-1px] text-[#2a2b2d]">29</div>
        </App56>
        <App56 className="bg-[#a9824c]">
          <svg viewBox="0 0 56 56" className="size-full" fill="none"><path d="M3 0V56" stroke="#8c6a3a" strokeWidth="1.500" /><circle cx="29" cy="27" r="17" stroke="#86683c" strokeWidth="1.600" /><circle cx="29" cy="23.500" r="6" fill="#8c6d3f" /><path d="M18 39C20 31 38 31 40 39C34 45 24 45 18 39Z" fill="#8c6d3f" /></svg>
        </App56>
        <App56 badge="3" className="bg-[#fafafa]">
          <svg viewBox="0 0 56 56" className="size-full" fill="none">
            <path d="M22 14.500H50M22 28H50M22 41.500H50" stroke="#c2c2c4" strokeWidth="1.400" />
            <circle cx="11" cy="14.500" r="4" stroke="#3a78f0" strokeWidth="1.300" /><circle cx="11" cy="14.500" r="2.600" fill="#3a78f0" />
            <circle cx="11" cy="28" r="4" stroke="#e5483f" strokeWidth="1.300" /><circle cx="11" cy="28" r="2.600" fill="#e5483f" />
            <circle cx="11" cy="41.500" r="4" stroke="#ee9a3c" strokeWidth="1.300" /><circle cx="11" cy="41.500" r="2.600" fill="#ee9a3c" />
          </svg>
        </App56>
        <App56 className="bg-[#f1f0ed]">
          <svg viewBox="0 0 56 56" className="size-full"><rect width="56" height="14" fill="#f6c944" /><path d="M0 16.500H56" stroke="#b5b3ae" strokeWidth="1.400" strokeDasharray="1.200 1.200" /><path d="M0 28H56M0 41H56" stroke="#cfcdc9" strokeWidth="1" /></svg>
        </App56>
        <App56 className="bg-linear-to-b from-[#84ec7c] to-[#55bd46]">
          <svg viewBox="0 0 40 26" className="h-[26px] w-[40px]"><rect y="1" width="27" height="24" rx="6" fill="#eef9ec" /><path d="M29 10L36 3.500C37.500 2.500 38.500 3 38.500 4.500V21.500C38.500 23 37.500 23.500 36 22.500L29 16Z" fill="#d3f0ce" /></svg>
        </App56>
        <App56 className="bg-linear-to-b from-[#ef6478] to-[#e73c46]">
          <svg viewBox="0 0 56 56" className="size-full" fill="#fff"><path d="M20 13.500L41 9V38C41 44 30 45.500 30 38.500C30 34 34 33.500 38 33V18.500L23 21.500V41C23 48 11 48.500 11 42C11 37.500 16 37.500 20 36.500Z" /></svg>
        </App56>
        <App56 className="bg-linear-to-b from-[#4fb0ee] to-[#2d5fdc]">
          <svg viewBox="0 0 56 56" className="size-full" stroke="#fff" strokeWidth="4.200" strokeLinecap="round"><path d="M31 13L17 37M25 13L41 42M10.500 34.500H34M40 34.500H45M15 41L13.500 43.500" /></svg>
        </App56>
        <App56 className="bg-linear-to-b from-[#b964e8] to-[#7230b5]">
          <svg viewBox="0 0 56 56" className="size-full" fill="none" stroke="#fff" strokeWidth="2.400" strokeLinecap="round"><path d="M19 42A18.500 18.500 0 1 1 37 42M20.500 35A11.500 11.500 0 1 1 35.500 35" /><circle cx="28" cy="25" r="4.600" fill="#fff" stroke="none" /><path d="M23.500 35C23.500 31 32.500 31 32.500 35L31 46.500C30.500 49.500 25.500 49.500 25 46.500Z" fill="#fff" stroke="none" /></svg>
        </App56>
        <App56 dot><SettingsIcon /></App56>
        <App56 dot><VsCodeIcon /></App56>
        <App56 className="bg-linear-to-b from-[#f5b54b] to-[#ee8a38]">
          <svg viewBox="0 0 56 56" className="size-full"><path d="M14 47H47" stroke="#fbd3a4" strokeWidth="1.800" /><path d="M9.500 47L13 38L41 11.500C44 9.500 47 12 45 15.500L17.500 42Z" fill="#f7f7f7" stroke="#a8a29a" strokeWidth="1" /><path d="M26 25.500L31 30" stroke="#777" strokeWidth="1.200" /></svg>
        </App56>
        <App56 className="items-start justify-start border-[2px] border-[#9aa7ad] bg-black p-[5px]">
          <div className="flex size-full items-start gap-[1px] rounded-[7px] bg-[#161e22] pt-[2px] pl-[2px] font-['Liberation_Mono'] text-[14px] leading-[14px] font-bold text-[#5fe04a]">$<div className="h-[12px] w-[6px] bg-[#2f7a28]" /></div>
        </App56>
      </div>
      <div className="ml-[21px] h-[66px] w-[2px] bg-[#555862]" />
      <div className="ml-[24px] flex gap-[16px]">
        <App56 dot className="bg-[#f2f2f3]">
          <svg viewBox="0 0 56 56" className="size-full">
            <circle cx="28" cy="28" r="24" fill="#f2c043" />
            <path d="M28 28L7.200 16A24 24 0 0 1 48.800 16H28Z" fill="#dd4b3e" />
            <path d="M28 28L7.200 16A24 24 0 0 0 28 52L38.400 34Z" fill="#4aa357" />
            <path d="M28 28L28 16H48.800A24 24 0 0 1 28 52L38.400 34Z" fill="#f2c043" />
            <circle cx="28" cy="28" r="12" fill="#fff" /><circle cx="28" cy="28" r="9.500" fill="#3f7ce8" />
          </svg>
        </App56>
        <App56 dot className="rounded-none"><NotionIcon /></App56>
        <App56 dot className="rounded-full bg-[#121212]"><FaSpotify className="size-[56px] text-[#65d36e]" /></App56>
        <App56 dot className="items-start justify-start border-[2px] border-[#b4bcc2] bg-black p-[4px]">
          <svg viewBox="0 0 44 44" className="size-full"><rect width="44" height="44" rx="8" fill="#212224" /><path d="M4 7L9.500 11L4 15M12 18H20" fill="none" stroke="#f0f0f0" strokeWidth="2.400" /></svg>
        </App56>
        <div className="relative">
          <App56><SafariIcon /></App56>
          <div className="absolute -top-[5px] -right-[6px] flex size-[25px] items-center justify-center rounded-full bg-[#c9cacc]"><div className="h-[16px] w-[8px] rounded-[2px] border-[2px] border-[#2a2b2d]" /></div>
        </div>
      </div>
      <div className="ml-[24px] h-[66px] w-[2px] bg-[#555862]" />
      <div className="-mt-[2px] ml-[17px] flex h-[64px] items-center">
        <MiniWindow right className="h-[48px] w-[64px]" side="#303236" rows="#3d7de8"><MessagesIcon /></MiniWindow>
        <MiniWindow className="ml-[12px] h-[64px] w-[56px]" side="#4a4d52" rows="#6a6d70"><SettingsIcon /></MiniWindow>
        <MiniWindow className="ml-[12px] h-[48px] w-[64px]" side="#1b1c1e" rows="#5f4c36"><VsCodeIcon /></MiniWindow>
        <MiniWindow className="ml-[9px] h-[40px] w-[64px]" side="#1e1f21" rows="#3b3d40"><NotionIcon /></MiniWindow>
        <svg viewBox="0 0 50 66" className="ml-[16px] h-[66px] w-[50px]">
          <defs><linearGradient id="bin" x1="0" y1="0" x2="1" y2="0"><stop stopColor="#6d7073" /><stop offset=".3" stopColor="#a9acae" /><stop offset=".7" stopColor="#84878a" /><stop offset="1" stopColor="#5f6265" /></linearGradient></defs>
          <path d="M1 12L49 12L43 60C42 65 8 65 7 60Z" fill="url(#bin)" />
          <ellipse cx="25" cy="13" rx="24" ry="4.500" fill="#4d5053" stroke="#b7babc" strokeWidth="1.500" />
          <path d="M6 13L9 5L15 8L19 1L26 6L33 2L37 7L43 6L45 13C38 17 12 17 6 13Z" fill="#e6e7e8" />
          <path d="M15 8L20 13L26 6M33 2L30 12L37 7" fill="none" stroke="#6fa6c4" strokeWidth="1.600" /><path d="M22 10L28 13L24 15Z" fill="#c2593f" />
        </svg>
      </div>
    </div>
  );
}

export default function App() {
  return (
    <div className="relative h-[1800px] w-[2880px] overflow-hidden bg-[#05070d] font-['Inter',sans-serif]">
      <svg viewBox="0 0 2880 160" className="absolute bottom-0 left-0 h-[160px] w-[2880px]">
        <defs><linearGradient id="wall" x1="0" y1="0" x2="0" y2="1"><stop stopColor="#07090f" /><stop offset="1" stopColor="#141a2a" /></linearGradient></defs>
        <path d="M0 140L380 100H2520L2640 160H0Z" fill="url(#wall)" />
        <path d="M340 160L480 148H520L400 160ZM690 158L760 150L720 160ZM880 158L930 151L1010 156V160H870ZM1880 160L1905 150H1930L1912 160Z" fill="#3a4056" />
      </svg>
      <div className="relative flex h-full flex-col">
        <MenuBar />
        <div className="relative mt-[1px] flex h-[1648px] flex-col overflow-hidden rounded-[22px] bg-white">
          <TabStrip />
          <Toolbar />
          <div className="flex flex-1 flex-col font-['Noto_Sans',sans-serif] [-webkit-text-stroke:0.35px]">
            <AwsHeader />
            <Breadcrumbs />
            <div className="flex h-[1022px] overflow-hidden pl-[48px]">
              <Sidebar />
              <Detail />
            </div>
            <div className="flex-1" />
            <Footer />
          </div>
          <div className="pointer-events-none absolute inset-0 rounded-[22px] border-x border-y-[2px] border-[#8a8f9c]/50" />
        </div>
      </div>
      <Dock />
    </div>
  );
}
